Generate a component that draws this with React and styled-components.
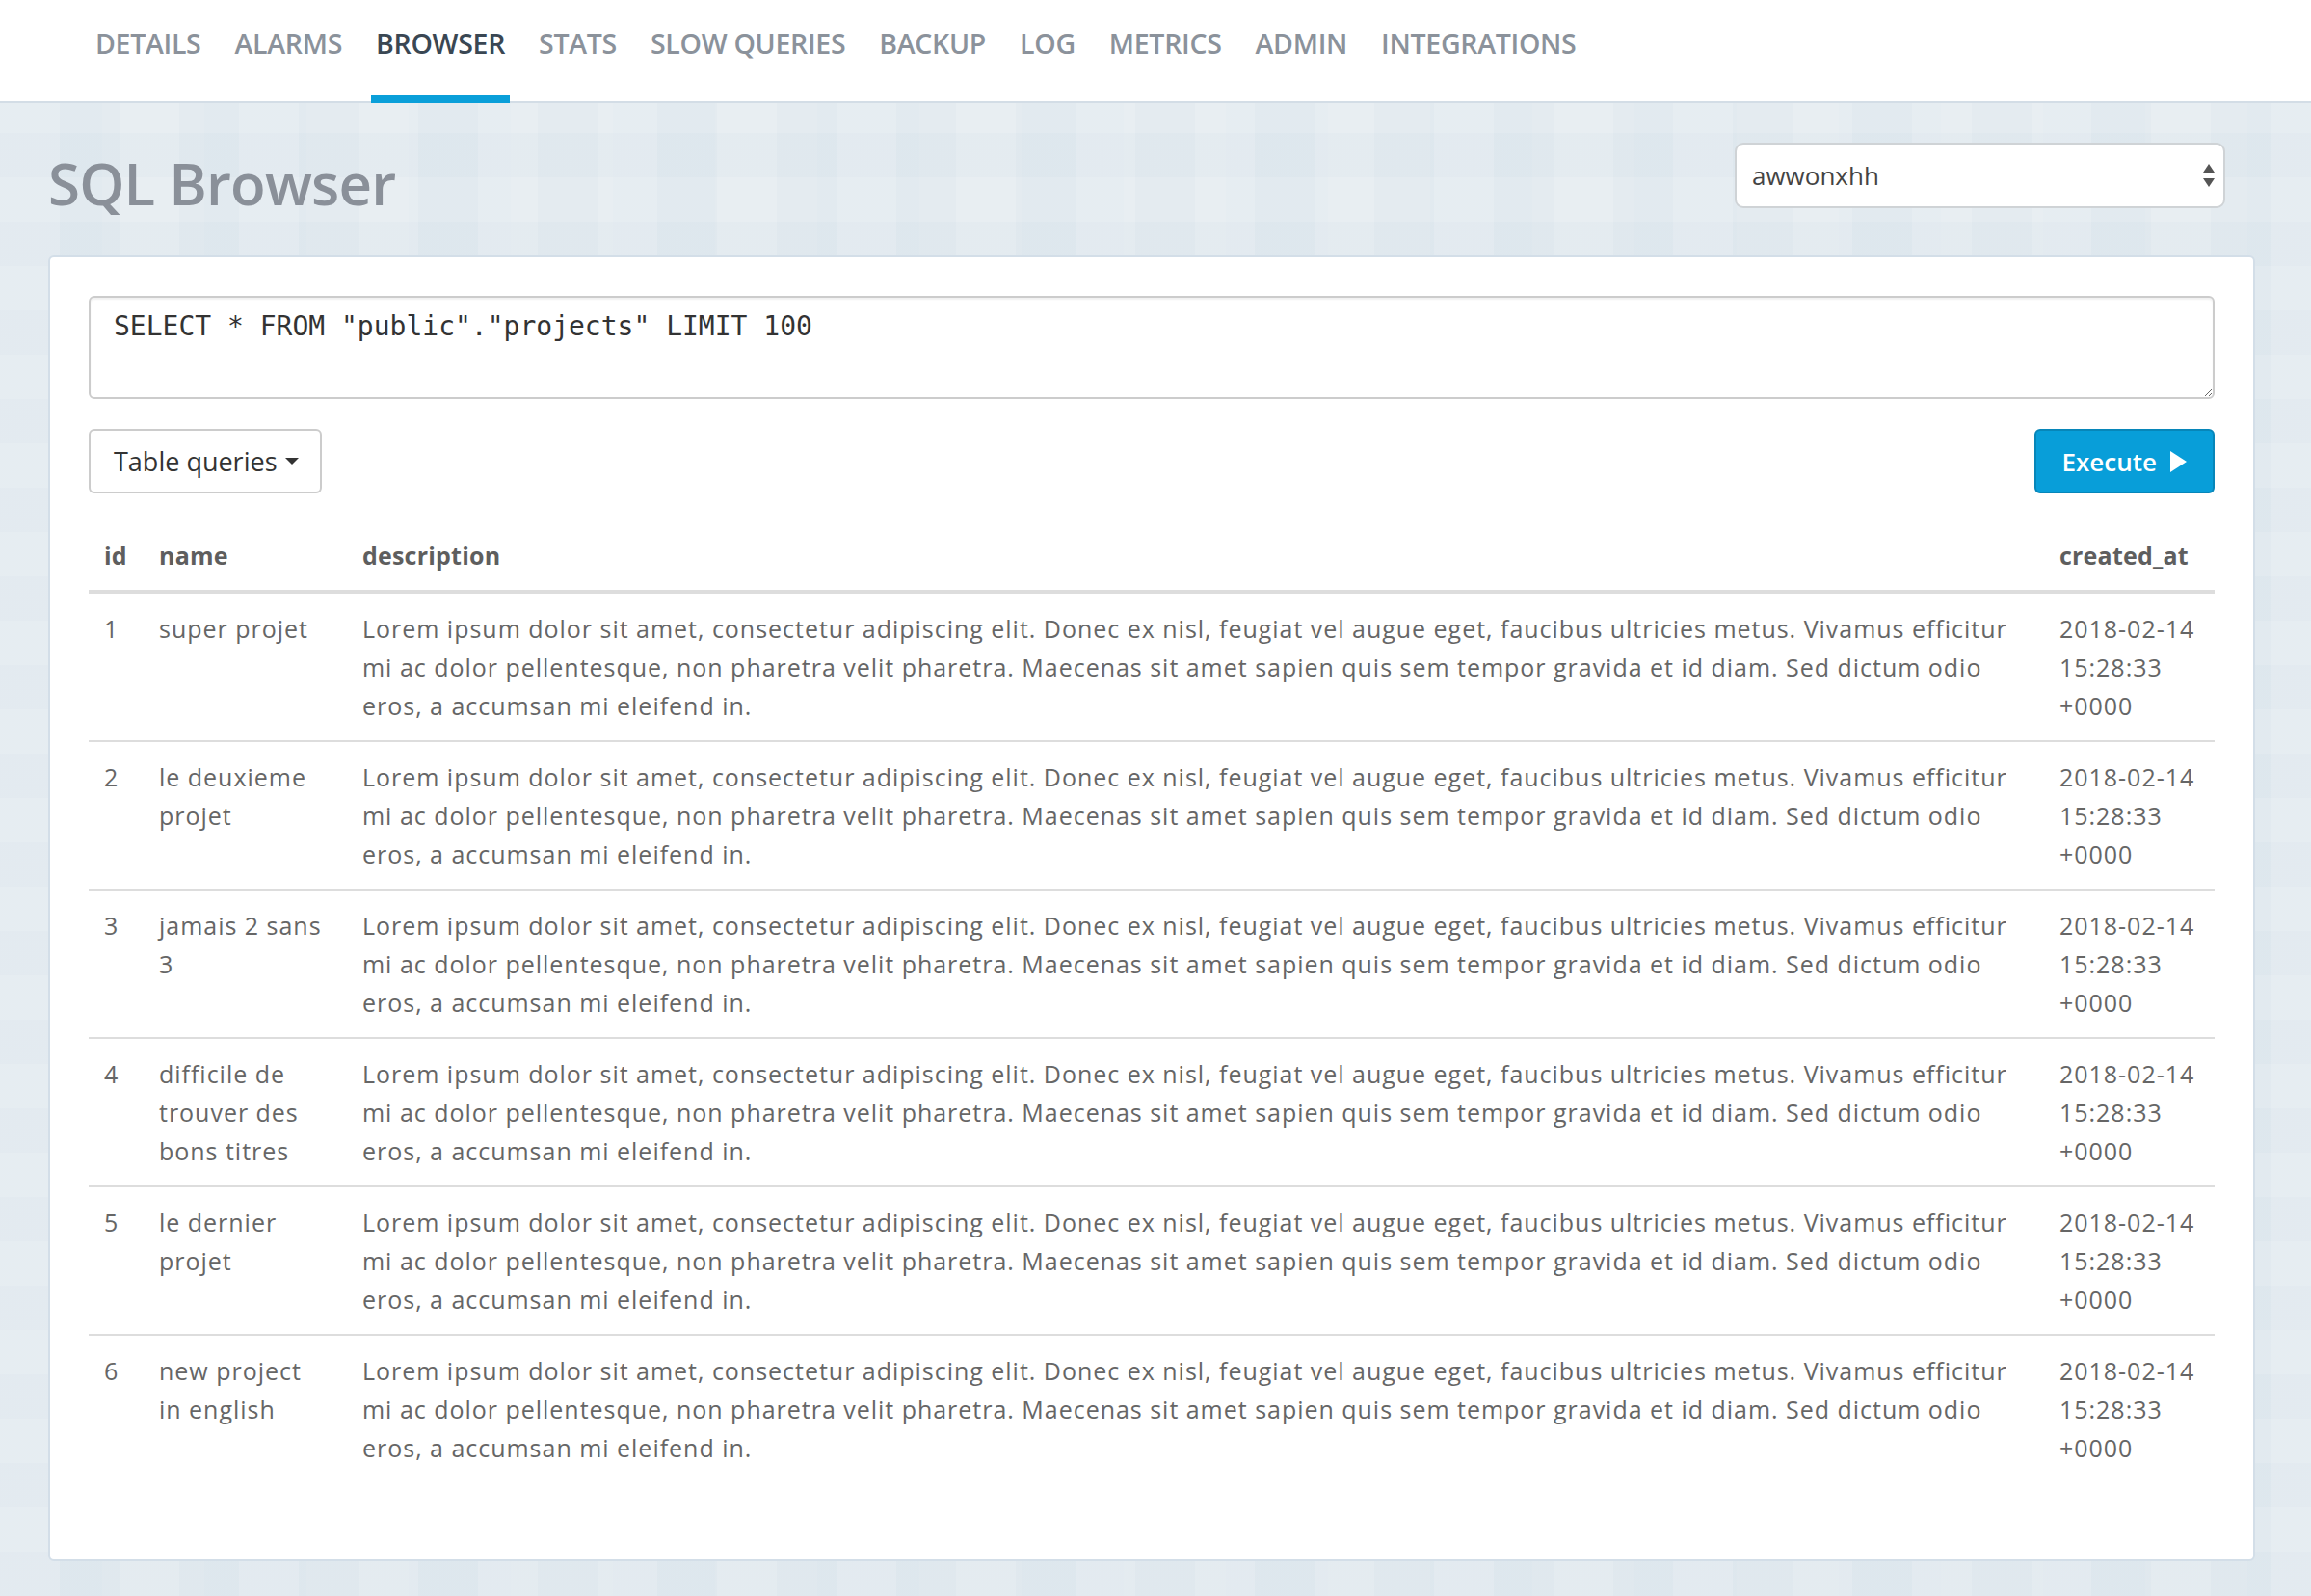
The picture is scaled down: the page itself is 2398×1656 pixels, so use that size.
import React from 'react'
import styled, {createGlobalStyle} from 'styled-components'

const GlobalStyle=createGlobalStyle`
  html, body {
    margin: 0;
    padding: 0;
  }
  body {
    font-family: "Open Sans", "Noto Sans", sans-serif;
    background-color: #e4ebf0;
    background-image:
      linear-gradient(90deg, rgba(255,255,255,0.14) 50%, transparent 50%),
      linear-gradient(0deg, rgba(205,218,228,0.18) 50%, transparent 50%),
      linear-gradient(90deg, rgba(220,230,238,0.2) 50%, transparent 50%);
    background-size: 124px 124px, 92px 92px, 212px 212px;
    color: #666;
  }
`

const tabs=["Details", "Alarms", "Browser", "Stats", "Slow queries", "Backup", "Log", "Metrics", "Admin", "Integrations"]

const lorem="Lorem ipsum dolor sit amet, consectetur adipiscing elit. Donec ex nisl, feugiat vel augue eget, faucibus ultricies metus. Vivamus efficitur mi ac dolor pellentesque, non pharetra velit pharetra. Maecenas sit amet sapien quis sem tempor gravida et id diam. Sed dictum odio eros, a accumsan mi eleifend in."

const rows=[
    {id: 1, name: "super projet"},
    {id: 2, name: "le deuxieme projet"},
    {id: 3, name: "jamais 2 sans 3"},
    {id: 4, name: "difficile de trouver des bons titres"},
    {id: 5, name: "le dernier projet"},
    {id: 6, name: "new project in english"},
]

const App=() => {
    return (
        <Page>
            <GlobalStyle />
            <NavBar>
                {tabs.map(t => (
                    <Tab key={t} active={t==="Browser"}>{t}</Tab>
                ))}
            </NavBar>

            <Main>
                <Header>
                    <Title>SQL Browser</Title>
                    <Select>
                        <span>awwonxhh</span>
                        <svg width="14" height="28" viewBox="0 0 14 28">
                            <path d="M7 2 L13 11 L1 11 Z" fill="#555" />
                            <path d="M1 17 L13 17 L7 26 Z" fill="#555" />
                        </svg>
                    </Select>
                </Header>

                <Card>
                    <QueryBox defaultValue={'SELECT * FROM "public"."projects" LIMIT 100'} spellCheck={false} />

                    <Actions>
                        <DefaultButton>
                            Table queries
                            <Caret />
                        </DefaultButton>
                        <PrimaryButton>
                            Execute
                            <svg width="20" height="24" viewBox="0 0 20 24">
                                <path d="M2 1 L19 12 L2 23 Z" fill="#fff" />
                            </svg>
                        </PrimaryButton>
                    </Actions>

                    <Table>
                        <colgroup>
                            <col style={{width: 57}} />
                            <col style={{width: 211}} />
                            <col />
                            <col style={{width: 177}} />
                        </colgroup>
                        <thead>
                            <tr>
                                <Th>id</Th>
                                <Th>name</Th>
                                <Th>description</Th>
                                <Th>created_at</Th>
                            </tr>
                        </thead>
                        <tbody>
                            {rows.map(r => (
                                <tr key={r.id}>
                                    <Td>{r.id}</Td>
                                    <NameCell>{r.name}</NameCell>
                                    <Td>{lorem}</Td>
                                    <DateCell>2018-02-14 15:28:33 +0000</DateCell>
                                </tr>
                            ))}
                        </tbody>
                    </Table>
                </Card>
            </Main>
        </Page>
    )
}

export default App

//Styled components.
const Page=styled.div`
  min-height: 100vh;
`

const NavBar=styled.nav`
  display: flex;
  align-items: stretch;
  gap: 25px;
  height: 107px;
  padding-left: 94px;
  background: #fff;
  border-bottom: 2px solid #d3dde6;
  box-sizing: border-box;
`

const Tab=styled.a`
  display: flex;
  align-items: center;
  padding: 0 5px 10px;
  margin-bottom: -2px;
  font-size: 28.5px;
  font-weight: 600;
  text-transform: uppercase;
  letter-spacing: -0.3px;
  color: ${p => p.active? '#3a4753':'#8b929b'};
  border-bottom: 8px solid ${p => p.active? '#0a9fd9':'transparent'};
  cursor: pointer;
`

const Main=styled.main`
  padding: 0 58px 40px 50px;
`

const Header=styled.div`
  display: flex;
  justify-content: space-between;
  align-items: flex-start;
  padding: 41px 31px 33px 0;
`

const Title=styled.h1`
  margin: 0;
  font-size: 60px;
  line-height: 84px;
  font-weight: 600;
  letter-spacing: -0.8px;
  color: #8a9099;
`

const Select=styled.div`
  display: flex;
  justify-content: space-between;
  align-items: center;
  width: 509px;
  height: 68px;
  box-sizing: border-box;
  padding: 0 8px 0 16px;
  background: #fff;
  border: 2px solid #cfd3d6;
  border-radius: 9px;
  font-size: 26px;
  color: #444;
`

const Card=styled.section`
  background: #fff;
  border: 2px solid #d3dee8;
  border-radius: 6px;
  padding: 40px 40px 80px;
`

const QueryBox=styled.textarea`
  display: block;
  width: 100%;
  height: 107px;
  box-sizing: border-box;
  padding: 8px 24px;
  border: 2px solid #ccc;
  border-radius: 6px;
  box-shadow: inset 0 2px 2px rgba(0,0,0,0.06);
  font-family: "DejaVu Sans Mono", "Liberation Mono", monospace;
  font-size: 28px;
  line-height: 44px;
  color: #333;
  resize: vertical;
  outline: none;
`

const Actions=styled.div`
  display: flex;
  justify-content: space-between;
  margin-top: 31px;
`

const DefaultButton=styled.button`
  display: flex;
  align-items: center;
  gap: 8px;
  height: 67px;
  padding: 0 22px 0 24px;
  background: #fff;
  border: 2px solid #ccc;
  border-radius: 6px;
  font-family: inherit;
  font-size: 27px;
  color: #333;
`

const Caret=styled.span`
  width: 0;
  height: 0;
  border-left: 7px solid transparent;
  border-right: 7px solid transparent;
  border-top: 7px solid #333;
`

const PrimaryButton=styled.button`
  display: flex;
  align-items: center;
  gap: 12px;
  height: 67px;
  padding: 0 26px;
  background: #089ed9;
  border: 2px solid #0786b9;
  border-radius: 6px;
  font-family: inherit;
  font-size: 26px;
  font-weight: 600;
  color: #fff;
`

const Table=styled.table`
  width: 100%;
  margin-top: 28px;
  border-collapse: collapse;
  table-layout: fixed;
  font-size: 25px;
  line-height: 40px;
  letter-spacing: 0.98px;
`

const Th=styled.th`
  padding: 16px;
  text-align: left;
  font-weight: 700;
  letter-spacing: 0.2px;
  color: #5e5e5e;
  border-bottom: 4px solid #ddd;
`

const Td=styled.td`
  padding: 16px;
  vertical-align: top;
  color: #666;
  border-top: 2px solid #ddd;
  tr:first-child > & {
    border-top: none;
  }
`

const NameCell=styled(Td)`
  padding-right: 22px;
`

const DateCell=styled(Td)`
  padding-right: 8px;
`
